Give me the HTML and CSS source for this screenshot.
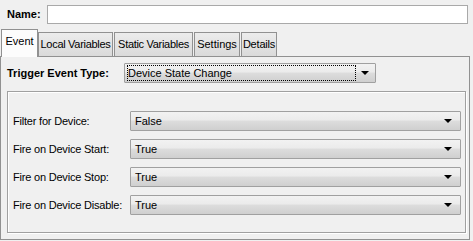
FILE: index.html
```html
<!DOCTYPE html>
<html>
<head>
<meta charset="utf-8">
<link rel="stylesheet" href="styles.css">
</head>
<body>
<div class="name-row">
  <span class="name-label">Name:</span>
  <div class="name-input"></div>
</div>
<div class="tabs">
  <div class="tab selected">Event</div>
  <div class="tab tab-local">Local Variables</div>
  <div class="tab tab-static">Static Variables</div>
  <div class="tab tab-settings">Settings</div>
  <div class="tab tab-details">Details</div>
</div>
<div class="panel">
  <div class="trigger-row">
    <span class="trigger-label">Trigger Event Type:</span>
    <div class="combo trigger-combo">
      <span class="combo-text focus">Device State Change</span>
      <span class="arrow"></span>
    </div>
  </div>
  <div class="group">
    <div class="field">
      <span class="field-label">Filter for Device:</span>
      <div class="combo"><span class="combo-text">False</span><span class="arrow"></span></div>
    </div>
    <div class="field">
      <span class="field-label">Fire on Device Start:</span>
      <div class="combo"><span class="combo-text">True</span><span class="arrow"></span></div>
    </div>
    <div class="field">
      <span class="field-label">Fire on Device Stop:</span>
      <div class="combo"><span class="combo-text">True</span><span class="arrow"></span></div>
    </div>
    <div class="field">
      <span class="field-label">Fire on Device Disable:</span>
      <div class="combo"><span class="combo-text">True</span><span class="arrow"></span></div>
    </div>
  </div>
</div>
</body>
</html>
```
FILE: styles.css
```css
html, body {
  margin: 0;
  padding: 0;
  background: #f0f0f0;
  width: 473px;
  height: 241px;
  overflow: hidden;
}
body {
  font-family: "Liberation Sans", Arial, sans-serif;
  font-size: 11px;
  color: #000;
  white-space: nowrap;
}
.name-row {
  display: flex;
  align-items: center;
  padding: 4px 5px 0 7px;
  height: 20px;
}
.name-label {
  font-weight: bold;
  width: 40px;
}
.name-input {
  flex: 1;
  height: 17px;
  border: 1px solid #a9a9a9;
  background: #fff;
}
.tabs {
  display: flex;
  align-items: flex-end;
  margin-top: 5px;
  padding-left: 1px;
  height: 27px;
  position: relative;
  z-index: 1;
}
.tab {
  height: 24px;
  box-sizing: border-box;
  border: 1px solid #919191;
  border-bottom: none;
  background: linear-gradient(#ececec, #dadada);
  padding-top: 5px;
  margin-right: 1px;
  letter-spacing: -0.3px;
  text-align: center;
}
.tab.selected {
  height: 28px;
  background: #fcfcfc;
  margin-bottom: -1px;
  margin-right: 0;
  width: 37px;
  letter-spacing: 0;
}
.tab-local { width: 75px; }
.tab-static { width: 79px; }
.tab-settings { width: 46px; letter-spacing: 0; }
.tab-details { width: 36px; letter-spacing: -0.2px; }
.panel {
  width: 470px;
  height: 184px;
  box-sizing: border-box;
  border: 1px solid #919191;
  background: #f0f0f0;
  padding: 6px 0 0 6px;
}
.trigger-row {
  display: flex;
  align-items: center;
  height: 20px;
}
.trigger-label {
  font-weight: bold;
  width: 117px;
}
.combo {
  display: flex;
  align-items: center;
  box-sizing: border-box;
  height: 20px;
  border: 1px solid #a0a0a0;
  background: linear-gradient(#f2f2f2 0%, #ebebeb 45%, #dddddd 50%, #cfcfcf 100%);
  border-radius: 1px;
}
.trigger-combo {
  width: 252px;
  padding: 1px 1px 1px 2px;
}
.combo-text {
  flex: 1;
  padding-left: 2px;
  height: 100%;
  display: flex;
  align-items: center;
  box-sizing: border-box;
}
.combo-text.focus {
  outline: 1px dotted #000;
  outline-offset: -1px;
  padding-left: 1px;
}
.arrow {
  width: 18px;
  height: 100%;
  display: flex;
  align-items: center;
  justify-content: center;
}
.arrow::before {
  content: "";
  width: 0;
  height: 0;
  border-left: 4px solid transparent;
  border-right: 4px solid transparent;
  border-top: 4px solid #000;
}
.group {
  margin-top: 8px;
  width: 459px;
  height: 142px;
  box-sizing: border-box;
  border: 1px solid #a0a0a0;
  box-shadow: inset 1px 1px 0 #fff, 1px 1px 0 #fff;
  padding: 19px 0 0 5px;
  display: flex;
  flex-direction: column;
  gap: 8px;
}
.field {
  display: flex;
  align-items: center;
  height: 20px;
}
.field-label {
  width: 117px;
  letter-spacing: -0.2px;
}
.field .combo {
  width: 331px;
  padding: 0 1px 0 4px;
}
.field .combo .combo-text {
  padding-left: 0;
}
.field .arrow {
  width: 22px;
}
```
